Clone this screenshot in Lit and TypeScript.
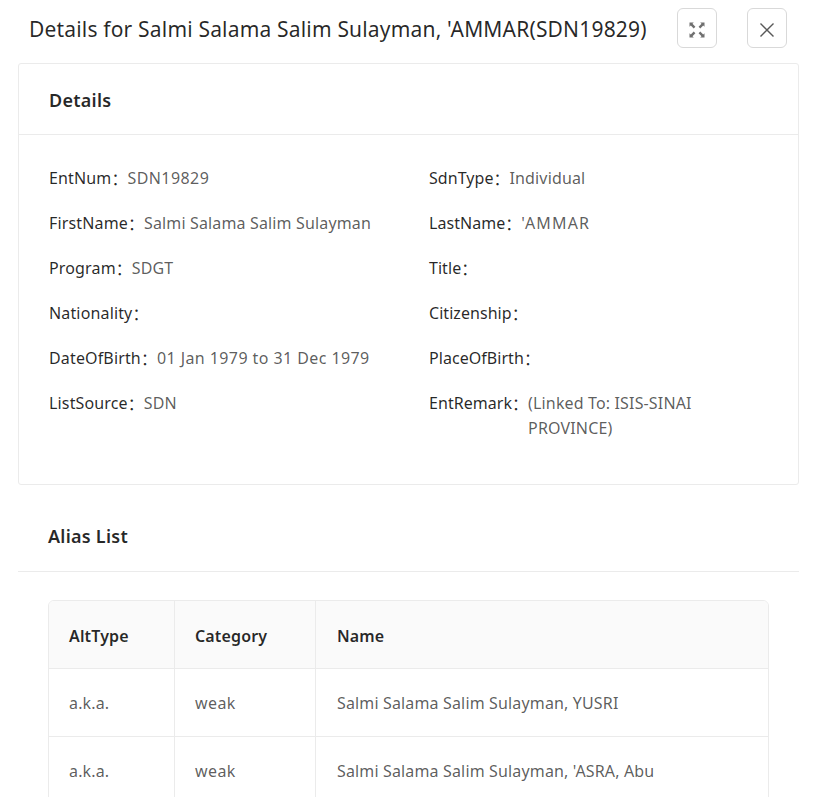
import { LitElement, html, css } from "lit";
import { customElement } from "lit/decorators.js";

const fields: [string, string, string?][] = [
  ["EntNum", "SDN19829", "num"], ["SdnType", "Individual"],
  ["FirstName", "Salmi Salama Salim Sulayman"], ["LastName", "'AMMAR", "caps"],
  ["Program", "SDGT"], ["Title", ""],
  ["Nationality", ""], ["Citizenship", ""],
  ["DateOfBirth", "01 Jan 1979 to 31 Dec 1979", "num"], ["PlaceOfBirth", ""],
  ["ListSource", "SDN"], ["EntRemark", "(Linked To: ISIS-SINAI PROVINCE)"],
];

const rows = [
  ["a.k.a.", "weak", "Salmi Salama Salim Sulayman, YUSRI"],
  ["a.k.a.", "weak", "Salmi Salama Salim Sulayman, 'ASRA, Abu"],
];

@customElement("app-root")
export class AppRoot extends LitElement {
  static styles = css`
    :host {
      display: block;
      height: 797px;
      overflow: hidden;
      background: #fff;
      font-family: "Noto Sans", "Noto Sans CJK SC", sans-serif;
      font-size: 16px;
      letter-spacing: 0.15px;
      line-height: 25px;
      color: rgba(0, 0, 0, 0.85);
    }
    .top {
      display: flex;
      align-items: center;
      height: 56px;
      padding: 0 32px 0 29px;
      box-sizing: border-box;
    }
    .title {
      flex: 1;
      font-size: 21px;
      line-height: 40px;
      margin-top: 1px;
      white-space: nowrap;
      letter-spacing: 0.18px;
    }
    .btn {
      width: 40px;
      height: 40px;
      box-sizing: border-box;
      border: 1px solid #d9d9d9;
      border-radius: 6px;
      background: #fff;
      display: flex;
      align-items: center;
      justify-content: center;
      padding: 4px 0 0;
      color: #595959;
    }
    .btn.full { color: #707070; }
    .btn + .btn { margin-left: 30px; }
    .card {
      margin: 7px 20px 0 18px;
      border: 1px solid #ebebeb;
      border-radius: 3px;
      height: 422px;
      box-sizing: border-box;
    }
    .head {
      height: 71px;
      box-sizing: border-box;
      padding: 2px 0 0 30px;
      display: flex;
      align-items: center;
      font-size: 18px;
      letter-spacing: 0.25px;
      font-weight: 600;
      border-bottom: 1px solid #ebebeb;
    }
    .grid {
      display: grid;
      grid-template-columns: 380px 339px;
      padding: 31px 0 0 30px;
      row-gap: 20px;
    }
    .field { display: flex; }
    .field:nth-child(even) .label { letter-spacing: 0.05px; }
    .label { white-space: nowrap; }
    .colon {
      font-family: "Noto Sans CJK SC", sans-serif;
      letter-spacing: 0;
      width: 16px;
      flex: none;
    }
    .value { color: rgba(0, 0, 0, 0.65); min-width: 0; }
    .value.num { letter-spacing: 0.42px; }
    .value.caps { letter-spacing: 1.15px; }
    .alias-head {
      margin: 0 20px 0 18px;
      height: 87px;
      padding: 17px 0 0 30px;
      box-sizing: border-box;
      display: flex;
      align-items: center;
      font-size: 18px;
      letter-spacing: 0.25px;
      font-weight: 600;
      border-bottom: 1px solid #ebebeb;
    }
    .table-wrap {
      margin: 28px 50px 0 48px;
      border: 1px solid #ebebeb;
      border-radius: 6px;
      overflow: hidden;
    }
    table {
      width: 100%;
      border-collapse: separate;
      border-spacing: 0;
      table-layout: fixed;
    }
    th, td {
      height: 68px;
      box-sizing: border-box;
      padding: 2px 20px 0;
      text-align: left;
      border-bottom: 1px solid #ebebeb;
      border-right: 1px solid #ebebeb;
      white-space: nowrap;
    }
    th:last-child, td:last-child { border-right: 0; padding-left: 21px; }
    th { background: #fafafa; font-weight: 600; padding-top: 4px; }
    td { color: rgba(0, 0, 0, 0.65); }
    td:nth-child(2) { letter-spacing: 0.4px; }
    .c1 { width: 126px; }
    .c2 { width: 141px; }
  `;

  render() {
    return html`
      <div class="top">
        <div class="title">Details for Salmi Salama Salim Sulayman, 'AMMAR(SDN19829)</div>
        <button class="btn full" aria-label="Fullscreen">
          <svg width="16" height="16" viewBox="0 0 16 16" fill="currentColor">
            <path d="M0.500 0.500h4.300L3.500 1.800 6.400 4.700 4.700 6.400 1.800 3.500 0.500 4.800z"/>
            <path d="M15.500 0.500h-4.300l1.300 1.300-2.900 2.900 1.700 1.700 2.900-2.900 1.300 1.300z"/>
            <path d="M0.500 15.500h4.300l-1.300-1.300 2.900-2.900-1.700-1.700-2.900 2.900-1.300-1.300z"/>
            <path d="M15.500 15.500h-4.300l1.300-1.300-2.900-2.900 1.700-1.700 2.900 2.900 1.300-1.300z"/>
          </svg>
        </button>
        <button class="btn" aria-label="Close">
          <svg width="14" height="14" viewBox="0 0 14 14" fill="none" stroke="currentColor" stroke-width="1.400">
            <path d="M0.500 0.500l13 13M13.500 0.500l-13 13"/>
          </svg>
        </button>
      </div>
      <section class="card">
        <div class="head">Details</div>
        <div class="grid">
          ${fields.map(
            ([k, v, kind]) => html`<div class="field"><span class="label">${k}</span><span class="colon">：</span><span class="value ${kind ?? ""}">${v}</span></div>`
          )}
        </div>
      </section>
      <div class="alias-head">Alias List</div>
      <div class="table-wrap">
        <table>
          <colgroup><col class="c1" /><col class="c2" /><col /></colgroup>
          <thead><tr><th>AltType</th><th>Category</th><th>Name</th></tr></thead>
          <tbody>
            ${rows.map((r) => html`<tr>${r.map((c) => html`<td>${c}</td>`)}</tr>`)}
          </tbody>
        </table>
      </div>
    `;
  }
}
